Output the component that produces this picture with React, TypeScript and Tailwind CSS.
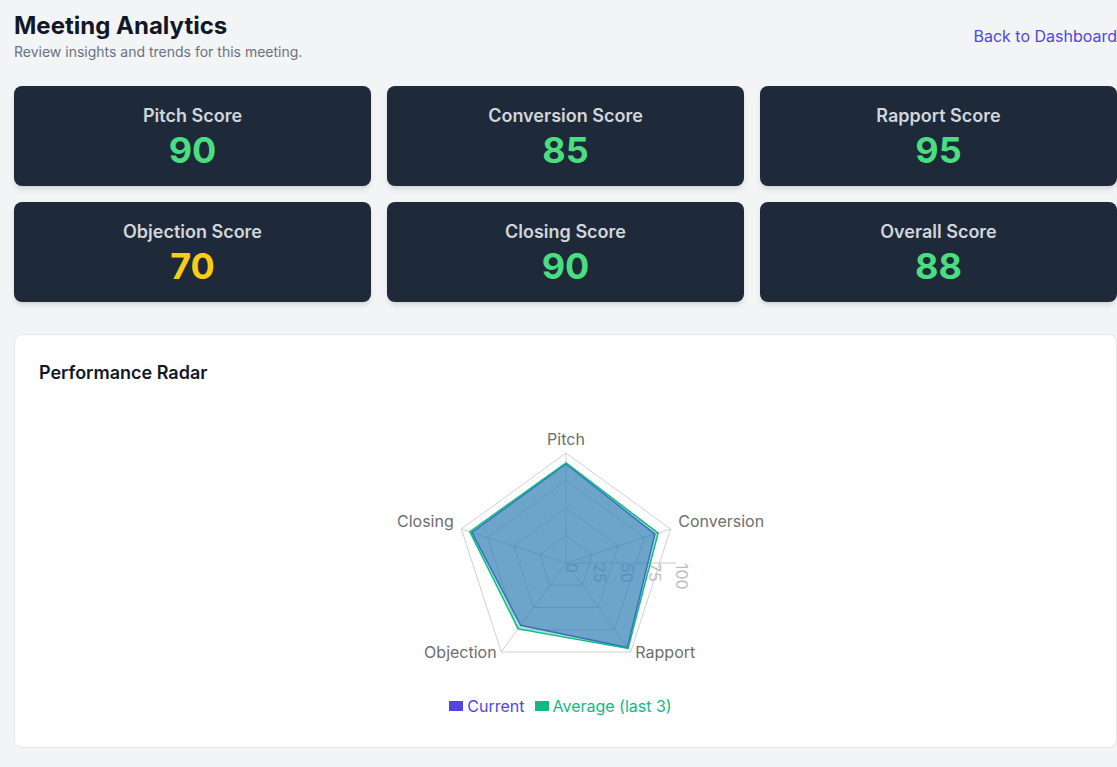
import React from "react";

const scores = [
  { label: "Pitch Score", value: 90, color: "text-[#4ade80]" },
  { label: "Conversion Score", value: 85, color: "text-[#4ade80]" },
  { label: "Rapport Score", value: 95, color: "text-[#4ade80]" },
  { label: "Objection Score", value: 70, color: "text-[#facc15]" },
  { label: "Closing Score", value: 90, color: "text-[#4ade80]" },
  { label: "Overall Score", value: 88, color: "text-[#4ade80]" },
];

const axes = ["Pitch", "Conversion", "Rapport", "Objection", "Closing"];
const current = [90, 85, 95, 70, 90];
const average = [91, 88, 96, 74, 92];

const CX = 527;
const CY = 160;
const R = 110;

function pt(i: number, r: number) {
  const a = ((-90 + 72 * i) * Math.PI) / 180;
  return [CX + r * Math.cos(a), CY + r * Math.sin(a)];
}

function poly(values: number[]) {
  return values
    .map((v, i) => pt(i, (R * v) / 100).map((n) => n.toFixed(1)).join(","))
    .join(" ");
}

function Radar() {
  const rings = [0.25, 0.5, 0.75, 1];
  return (
    <svg width={1054} height={291} className="block">
      {rings.map((k) => (
        <polygon
          key={k}
          points={poly([100, 100, 100, 100, 100].map((v) => v * k))}
          fill="none"
          stroke="#d0d0d0"
          strokeWidth={1}
        />
      ))}
      {axes.map((_, i) => {
        const [x, y] = pt(i, R);
        return <line key={i} x1={CX} y1={CY} x2={x} y2={y} stroke="#d0d0d0" />;
      })}
      <line x1={CX} y1={CY} x2={CX + R} y2={CY} stroke="#c8c8c8" />
      {[0, 25, 50, 75, 100].map((t) => {
        const x = CX + (R * t) / 100;
        return (
          <text
            key={t}
            x={x}
            y={CY}
            transform={`rotate(90 ${x} ${CY})`}
            fontSize={16}
            fill="#bdbdbd"
          >
            {t}
          </text>
        );
      })}
      <polygon
        points={poly(current)}
        fill="#4f46e5"
        fillOpacity={0.55}
        stroke="#4f46e5"
        strokeWidth={1.5}
      />
      <polygon
        points={poly(average)}
        fill="#10b981"
        fillOpacity={0.35}
        stroke="#10b981"
        strokeWidth={1.5}
      />
      {axes.map((name, i) => {
        const [x, y] = pt(i, R + 8);
        const anchor = i === 0 ? "middle" : i === 1 || i === 2 ? "start" : "end";
        return (
          <text key={name} x={x} y={y} textAnchor={anchor} fontSize={16} fill="#6e6e6e">
            {name}
          </text>
        );
      })}
    </svg>
  );
}

export default function App() {
  return (
    <div
      className="min-h-screen bg-gray-100 pl-[14px] pt-[10px] pb-5"
      style={{ fontFamily: "Inter, 'Noto Sans', sans-serif" }}
    >
      <div className="flex items-center justify-between">
        <div>
          <h1 className="text-2xl font-bold text-gray-900">Meeting Analytics</h1>
          <p className="text-sm text-gray-500">Review insights and trends for this meeting.</p>
        </div>
        <a className="text-base text-[#4f46e5]">Back to Dashboard</a>
      </div>

      <div className="mt-[24px] grid grid-cols-3 gap-4">
        {scores.map((s) => (
          <div key={s.label} className="rounded-lg bg-gray-800 p-4 text-center shadow-md">
            <div className="text-lg font-semibold text-gray-300">{s.label}</div>
            <div className={`text-4xl font-bold ${s.color}`}>{s.value}</div>
          </div>
        ))}
      </div>

      <div className="mt-8 rounded-lg border border-gray-200 bg-white p-6">
        <h2 className="text-lg font-semibold text-gray-900">Performance Radar</h2>
        <div className="mt-4 flex justify-center">
          <Radar />
        </div>
        <div className="mb-[5px] flex items-center justify-center gap-[10px] pr-[10px] text-base leading-6">
          <div className="flex items-center gap-1 text-[#4f46e5]">
            <span className="inline-block h-[10px] w-[14px] bg-[#4f46e5]" />
            Current
          </div>
          <div className="flex items-center gap-1 text-[#10b981]">
            <span className="inline-block h-[10px] w-[14px] bg-[#10b981]" />
            Average (last 3)
          </div>
        </div>
      </div>
    </div>
  );
}
